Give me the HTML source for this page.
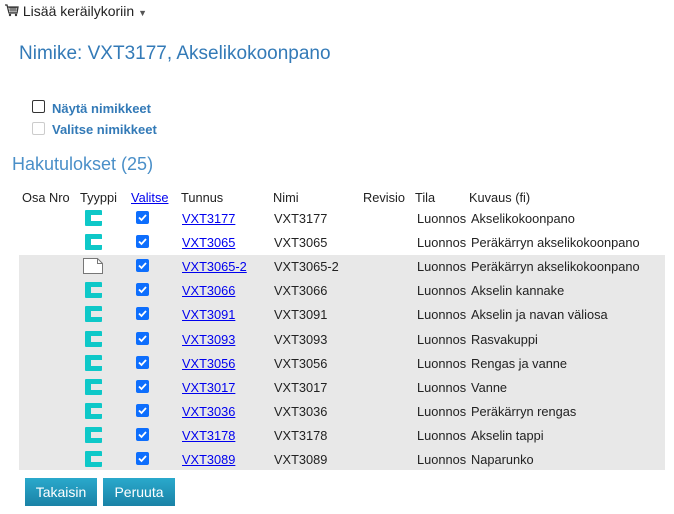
<!DOCTYPE html>
<html><head><meta charset="utf-8"><style>
body{margin:0;width:674px;height:514px;background:#fff;font-family:"Liberation Sans",sans-serif;font-size:12.8px;color:#222;position:relative;overflow:hidden}
.a{position:absolute;white-space:nowrap}
.lnk{color:#0000ee;text-decoration:underline}
.grey{position:absolute;left:19px;width:646px;background:#e8e8e8}
.cb{position:absolute;width:13px;height:13px;background:#0d6efd;border-radius:2px}
.cb svg{display:block}
.btn{position:absolute;top:478px;height:28px;background:linear-gradient(#2aa9cc,#1a82a6);color:#fff;font-size:14px;line-height:28px;text-align:center}
</style></head><body>
<div class="a" style="left:5px;top:3px;font-size:14px;color:#222">
<svg width="14" height="13" viewBox="0 0 14 13" style="vertical-align:-1px"><path d="M0 1h2l2 8h8l1-6H3" fill="none" stroke="#333" stroke-width="1.3"/><path d="M4 4h8M4 6h8M6 3v6M8 3v6M10 3v6" stroke="#333" stroke-width="0.8"/><circle cx="5" cy="11" r="1.2" fill="#333"/><circle cx="11" cy="11" r="1.2" fill="#333"/></svg>
Lisää keräilykoriin <span style="font-size:9px;color:#555">▼</span></div>
<div class="a" style="left:19px;top:43px;font-size:19px;color:#337ab7">Nimike: VXT3177, Akselikokoonpano</div>
<div class="a" style="left:32px;top:100px;width:11px;height:11px;border:1px solid #333;border-radius:2px"></div>
<div class="a" style="left:52px;top:101px;font-weight:bold;color:#337ab7;font-size:13px">Näytä nimikkeet</div>
<div class="a" style="left:32px;top:122px;width:11px;height:11px;border:1px solid #ccc;border-radius:2px"></div>
<div class="a" style="left:52px;top:122px;font-weight:bold;color:#337ab7;font-size:13px">Valitse nimikkeet</div>
<div class="a" style="left:12px;top:154px;font-size:18px;color:#4a8fc8">Hakutulokset (25)</div>
<div class="a" style="left:22px;top:190px">Osa Nro</div>
<div class="a" style="left:80px;top:190px">Tyyppi</div>
<div class="a lnk" style="left:131px;top:190px">Valitse</div>
<div class="a" style="left:181px;top:190px">Tunnus</div>
<div class="a" style="left:273px;top:190px">Nimi</div>
<div class="a" style="left:363px;top:190px">Revisio</div>
<div class="a" style="left:415px;top:190px">Tila</div>
<div class="a" style="left:469px;top:190px">Kuvaus (fi)</div>
<div class="grey" style="top:255px;height:215px"></div>
<div id="rows"></div>
<script>
var d=[["VXT3177","Akselikokoonpano"],["VXT3065","Peräkärryn akselikokoonpano"],["VXT3065-2","Peräkärryn akselikokoonpano",1],["VXT3066","Akselin kannake"],["VXT3091","Akselin ja navan väliosa"],["VXT3093","Rasvakuppi"],["VXT3056","Rengas ja vanne"],["VXT3017","Vanne"],["VXT3036","Peräkärryn rengas"],["VXT3178","Akselin tappi"],["VXT3089","Naparunko"]];
var h="";d.forEach(function(r,i){var c=Math.round(218+i*24.1);var t=c-7;
var ic=r[2]?'<svg style="position:absolute;left:83px;top:'+(c-8)+'px" width="20" height="16" viewBox="0 0 20 16"><path d="M0.5 0.5h14l5 5v10h-19z" fill="#fff" stroke="#777"/><path d="M14.5 0.5v5h5" fill="none" stroke="#777"/></svg>'
:'<svg style="position:absolute;left:85px;top:'+(c-8)+'px" width="17" height="16" viewBox="0 0 17 16"><path d="M1 0h15a1 1 0 0 1 1 1v4H6v6h11v4a1 1 0 0 1-1 1H1a1 1 0 0 1-1-1V1a1 1 0 0 1 1-1z" fill="#0ec8c8"/></svg>';
h+=ic+'<div class="cb" style="left:136px;top:'+(c-7)+'px"><svg width="13" height="13"><path d="M3 6.5l2.5 2.5 4.5-5" fill="none" stroke="#fff" stroke-width="1.8"/></svg></div>'
+'<div class="a lnk" style="left:182px;top:'+t+'px">'+r[0]+'</div><div class="a" style="left:274px;top:'+t+'px">'+r[0]+'</div><div class="a" style="left:417px;top:'+t+'px">Luonnos</div><div class="a" style="left:471px;top:'+t+'px">'+r[1]+'</div>';});
document.getElementById("rows").innerHTML=h;
</script>
<div class="btn" style="left:25px;width:72px">Takaisin</div>
<div class="btn" style="left:103px;width:72px">Peruuta</div>
</body></html>
